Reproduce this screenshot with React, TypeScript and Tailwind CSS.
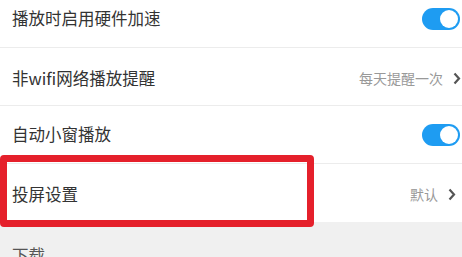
import React from "react";

// ----------------------------------------------------------------------------
// Playback settings list (scrolled view)
// ----------------------------------------------------------------------------

const font = { fontFamily: '"Noto Sans CJK SC", "Noto Sans", sans-serif' };

function Toggle() {
  return (
    <div className="w-[38px] h-[22px] rounded-full bg-[#1e9cf2] flex items-center justify-end pr-[2px]">
      <div className="w-[18px] h-[18px] rounded-full bg-white" />
    </div>
  );
}

function Chevron({ className = "ml-[9px]" }: { className?: string }) {
  return (
    <svg width="8" height="13" viewBox="0 0 8 13" className={className}>
      <path d="M1.5 1.5 L6 6.5 L1.5 11.5" fill="none" stroke="#555" strokeWidth="2.2" />
    </svg>
  );
}

function Row({
  label,
  children,
  className = "",
}: {
  label: string;
  children?: React.ReactNode;
  className?: string;
}) {
  return (
    <div
      className={`h-[58px] flex items-center justify-between pl-[12px] pr-[2px] border-b border-[#ececec] bg-white ${className}`}
    >
      <span className="text-[16.5px] text-[#333]">{label}</span>
      <div className="flex items-center">{children}</div>
    </div>
  );
}

export default function App() {
  return (
    <div className="w-[462px] h-[257px] overflow-hidden bg-white" style={font}>
      <div className="-mt-[10px] flex flex-col">
        <Row label="播放时启用硬件加速">
          <Toggle />
        </Row>
        <Row label="非wifi网络播放提醒" className="pt-[4px] pr-0">
          <span className="text-[14px] text-[#999]">每天提醒一次</span>
          <Chevron className="ml-[10px] -mr-[1px]" />
        </Row>
        <Row label="自动小窗播放">
          <Toggle />
        </Row>
        <div className="relative">
          <Row label="投屏设置" className="border-b-0 pr-[6px] pt-[2px]">
            <span className="text-[14px] text-[#999]">默认</span>
            <Chevron className="ml-[10px]" />
          </Row>
          <div className="absolute left-0 top-[-9px] w-[314px] h-[72px] border-[7px] border-[#e5202b] rounded-[4px]" />
        </div>
        <div className="bg-[#f0f0f0] h-[60px] pl-[12px] pt-[21px]">
          <span className="text-[16.5px] text-[#555]">下载</span>
        </div>
      </div>
    </div>
  );
}
